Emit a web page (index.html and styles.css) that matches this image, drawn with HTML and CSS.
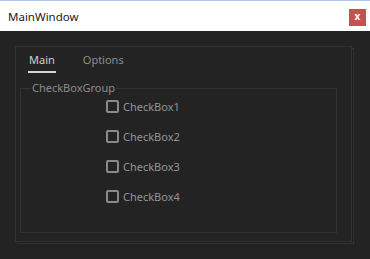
FILE: index.html
```html
<!DOCTYPE html>
<html>
<head>
<meta charset="utf-8">
<link rel="stylesheet" href="styles.css">
</head>
<body>
<div class="window">
  <div class="titlebar">
    <span class="title">MainWindow</span>
    <span class="close">x</span>
  </div>
  <div class="content">
    <div class="frame">
      <div class="tabs">
        <span class="tab active">Main</span>
        <span class="tab">Options</span>
      </div>
      <fieldset class="group">
        <legend>CheckBoxGroup</legend>
        <div class="checks">
          <label class="check"><span class="box"></span>CheckBox1</label>
          <label class="check"><span class="box"></span>CheckBox2</label>
          <label class="check"><span class="box"></span>CheckBox3</label>
          <label class="check"><span class="box"></span>CheckBox4</label>
        </div>
      </fieldset>
    </div>
  </div>
</div>
</body>
</html>
```
FILE: styles.css
```css
* { box-sizing: border-box; }
html, body { margin: 0; padding: 0; }
body {
  width: 370px;
  height: 259px;
  background: #232323;
  font-family: "Noto Sans", "Open Sans", sans-serif;
  overflow: hidden;
}
.window { width: 370px; height: 259px; display: flex; flex-direction: column; }
.titlebar {
  height: 31px;
  background: #ffffff;
  border-top: 1px solid #a9c8ec;
  display: flex;
  align-items: center;
  justify-content: space-between;
  padding: 0 4px 0 8px;
}
.title { font-size: 11.5px; color: #1a1a1a; line-height: 16px; margin-top: 1px; }
.close {
  width: 17px;
  height: 17px;
  background: #c75050;
  color: #fff;
  font-size: 10px;
  font-weight: bold;
  line-height: 15px;
  text-align: center;
  margin-top: 2px;
}
.content { padding: 15px 0 0 15px; }
.frame {
  width: 337px;
  height: 196px;
  border: 1px solid #323232;
  box-shadow: 2px 2px 0 -1px #1e1e1e, 2px 2px 0 0 #323232;
  display: flex;
  flex-direction: column;
  padding: 0 14px 8px 4px;
}
.tabs { display: flex; gap: 26px; padding-left: 8px; }
.tab {
  font-size: 11px;
  line-height: 16px;
  padding: 5px 1px 3px;
  color: #8e8e8e;
  border-bottom: 2px solid transparent;
}
.tab.active { color: #d2d2d2; border-bottom-color: #d8d8d8; }
.group {
  margin: 7px 0 0 0;
  padding: 0;
  border: 1px solid #333333;
  flex: 1;
  min-width: 0;
}
.group legend {
  font-size: 11px;
  line-height: 16px;
  color: #8c8c8c;
  padding: 0 1px;
  margin-left: 10px;
}
.checks {
  display: flex;
  flex-direction: column;
  gap: 10px;
  padding-left: 85px;
}
.check {
  display: flex;
  align-items: center;
  height: 20px;
  font-size: 11px;
  color: #959595;
  gap: 4px;
}
.box {
  width: 13px;
  height: 13px;
  border: 2px solid #8a8a8a;
  border-radius: 2px;
}
```
